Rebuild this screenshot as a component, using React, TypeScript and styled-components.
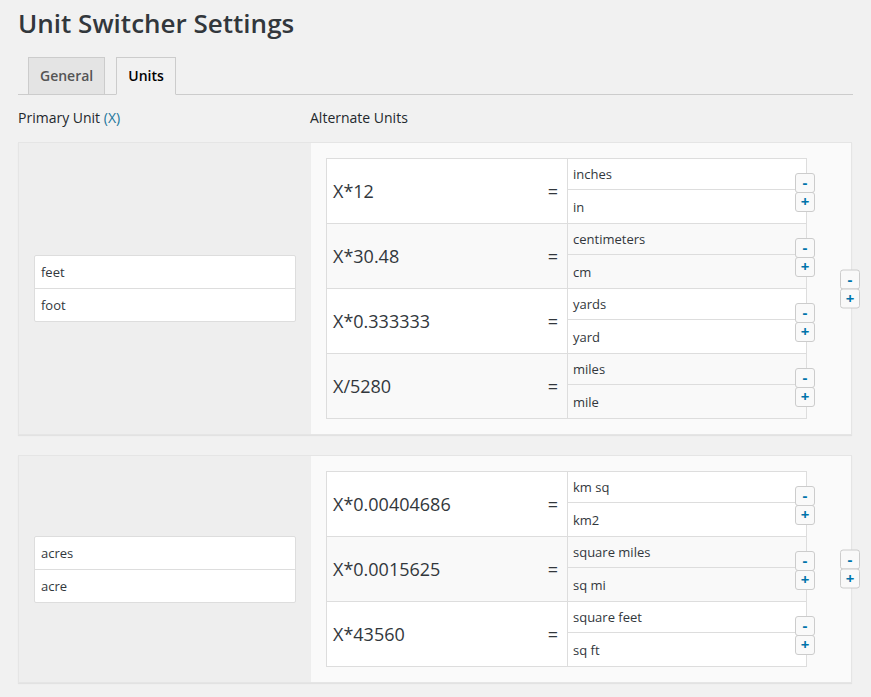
import React from "react";
import styled, { createGlobalStyle } from "styled-components";

const Global = createGlobalStyle`
  html, body { margin: 0; padding: 0; background: #f1f1f1; }
  body { font-family: "Open Sans", "Liberation Sans", sans-serif; color: #23282d; }
  * { box-sizing: border-box; }
`;

const Wrap = styled.div`
  padding: 6px 18px 20px 18px;
`;

const Title = styled.h1`
  margin: 0;
  font-size: 26px;
  line-height: 34px;
  font-weight: 600;
  color: #32373c;
`;

const NavWrapper = styled.div`
  margin-top: 17px;
  display: flex;
  align-items: flex-end;
  border-bottom: 1px solid #ccc;
  padding-left: 10px;
  gap: 11px;
`;

const Tab = styled.div<{ $active?: boolean }>`
  padding: 5px 11px;
  font-size: 14px;
  line-height: 26px;
  font-weight: 600;
  border: 1px solid #ccc;
  border-bottom-color: ${(p) => (p.$active ? "#f1f1f1" : "#ccc")};
  background: ${(p) => (p.$active ? "#f1f1f1" : "#e4e4e4")};
  color: ${(p) => (p.$active ? "#000" : "#555")};
  margin-bottom: -1px;
`;

const Labels = styled.div`
  display: grid;
  grid-template-columns: 292px 1fr;
  margin-top: 13px;
  font-size: 14px;
  line-height: 20px;
  color: #23282d;
`;

const XLink = styled.span`
  color: #21759b;
`;

const Card = styled.div`
  position: relative;
  display: flex;
  margin-top: 14px;
  margin-right: 1px;
  border: 1px solid #e5e5e5;
  box-shadow: 0 1px 1px rgba(0, 0, 0, 0.06);
  & + & {
    margin-top: 20px;
  }
`;

const LeftCol = styled.div`
  width: 292px;
  background: #eeeeee;
  display: flex;
  align-items: center;
  padding: 0 15px;
`;

const InputGroup = styled.div`
  flex: 1;
  background: #fff;
  border: 1px solid #dddddd;
  border-radius: 2px;
`;

const InputRow = styled.div`
  height: 32px;
  line-height: 32px;
  padding-left: 6px;
  font-size: 13px;
  color: #32373c;
  & + & {
    border-top: 1px solid #dddddd;
    height: 33px;
  }
`;

const RightCol = styled.div`
  flex: 1;
  background: #fafafa;
  padding: 15px 44px 15px 15px;
`;

const Table = styled.div`
  border: 1px solid #dddddd;
`;

const Row = styled.div<{ $alt?: boolean }>`
  position: relative;
  display: flex;
  height: 64px;
  background: ${(p) => (p.$alt ? "#f9f9f9" : "#ffffff")};
  & + & {
    border-top: 1px solid #dddddd;
    height: 65px;
  }
`;

const Formula = styled.div`
  width: 241px;
  border-right: 1px solid #dddddd;
  display: flex;
  align-items: center;
  justify-content: space-between;
  padding: 0 9px 0 6px;
  font-size: 18px;
  color: #32373c;
`;

const Units = styled.div`
  flex: 1;
  display: flex;
  flex-direction: column;
`;

const UnitName = styled.div`
  height: 30px;
  line-height: 30px;
  padding-left: 5px;
  font-size: 13px;
  color: #32373c;
  & + & {
    flex: 1;
    height: auto;
    line-height: 34px;
    border-top: 1px solid #dddddd;
  }
`;

const BtnPair = styled.div<{ $outer?: boolean }>`
  position: absolute;
  right: -9px;
  top: ${(p) => (p.$outer ? "50%" : "14px")};
  transform: ${(p) => (p.$outer ? "translateY(-50%)" : "none")};
  display: flex;
  flex-direction: column;
`;

const Btn = styled.div`
  width: 20px;
  height: 20px;
  border: 1px solid #cccccc;
  border-radius: 3px;
  background: #f9f9f9;
  color: #0073aa;
  font-size: 15px;
  font-weight: 700;
  line-height: 17px;
  text-align: center;
  & + & {
    margin-top: -1px;
  }
`;

type Alt = { formula: string; names: [string, string] };
type Group = { primary: [string, string]; alts: Alt[] };

const groups: Group[] = [
  {
    primary: ["feet", "foot"],
    alts: [
      { formula: "X*12", names: ["inches", "in"] },
      { formula: "X*30.48", names: ["centimeters", "cm"] },
      { formula: "X*0.333333", names: ["yards", "yard"] },
      { formula: "X/5280", names: ["miles", "mile"] },
    ],
  },
  {
    primary: ["acres", "acre"],
    alts: [
      { formula: "X*0.00404686", names: ["km sq", "km2"] },
      { formula: "X*0.0015625", names: ["square miles", "sq mi"] },
      { formula: "X*43560", names: ["square feet", "sq ft"] },
    ],
  },
];

function Buttons({ outer }: { outer?: boolean }) {
  return (
    <BtnPair $outer={outer}>
      <Btn>-</Btn>
      <Btn>+</Btn>
    </BtnPair>
  );
}

export default function App() {
  return (
    <>
      <Global />
      <Wrap>
        <Title>Unit Switcher Settings</Title>
        <NavWrapper>
          <Tab>General</Tab>
          <Tab $active>Units</Tab>
        </NavWrapper>
        <Labels>
          <div>
            Primary Unit <XLink>(X)</XLink>
          </div>
          <div>Alternate Units</div>
        </Labels>
        {groups.map((g, gi) => (
          <Card key={gi}>
            <LeftCol>
              <InputGroup>
                <InputRow>{g.primary[0]}</InputRow>
                <InputRow>{g.primary[1]}</InputRow>
              </InputGroup>
            </LeftCol>
            <RightCol>
              <Table>
                {g.alts.map((a, ai) => (
                  <Row key={ai} $alt={ai % 2 === 1}>
                    <Formula>
                      <span>{a.formula}</span>
                      <span>=</span>
                    </Formula>
                    <Units>
                      <UnitName>{a.names[0]}</UnitName>
                      <UnitName>{a.names[1]}</UnitName>
                    </Units>
                    <Buttons />
                  </Row>
                ))}
              </Table>
            </RightCol>
            <Buttons outer />
          </Card>
        ))}
      </Wrap>
    </>
  );
}
